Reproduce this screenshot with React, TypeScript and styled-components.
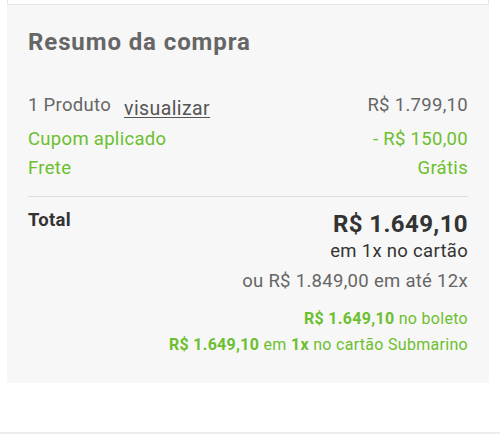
import React from "react";
import styled, { createGlobalStyle } from "styled-components";

const Global = createGlobalStyle`
  html, body { margin: 0; padding: 0; background: #fff; }
  body { font-family: Roboto, "Noto Sans", Arial, sans-serif; width: 500px; height: 445px; overflow: hidden; }
`;

const Page = styled.div`
  display: flex;
  flex-direction: column;
`;

const TopCard = styled.div`
  margin: 0 11px 0 7px;
  height: 4px;
  border: 1px solid #e6e6e6;
  border-top: none;
  background: #fff;
`;

const Panel = styled.section`
  margin: 0 11px 0 7px;
  background: #f7f7f7;
  padding: 23px 21px 25px 21px;
  display: flex;
  flex-direction: column;
`;

const Title = styled.h2`
  margin: 0 0 35px 0;
  font-size: 24px;
  line-height: 28px;
  font-weight: 700;
  letter-spacing: 0.9px;
  color: #666;
`;

const Row = styled.div<{ $green?: boolean; $gap?: number }>`
  display: flex;
  justify-content: space-between;
  align-items: baseline;
  font-size: 18.5px;
  line-height: 29px;
  letter-spacing: 0.3px;
  margin-bottom: ${(p) => p.$gap ?? 0}px;
  color: ${(p) => (p.$green ? "#6cbf2e" : "#666")};
`;

const Link = styled.a`
  color: #555;
  font-size: 19.5px;
  letter-spacing: 0.4px;
  line-height: 1;
  text-decoration: underline;
  text-underline-offset: 2px;
  margin-left: 13px;
  vertical-align: -4px;
`;

const Divider = styled.hr`
  border: none;
  border-top: 1px solid #dcdcdc;
  margin: 13px 0 12px;
`;

const TotalBlock = styled.div`
  display: flex;
  justify-content: space-between;
  align-items: flex-start;
`;

const TotalLabel = styled.div`
  font-size: 18.5px;
  font-weight: 700;
  letter-spacing: 0.3px;
  color: #333;
  line-height: 22px;
`;

const Prices = styled.div`
  display: flex;
  flex-direction: column;
  align-items: flex-end;
  text-align: right;
`;

const BigPrice = styled.div`
  font-size: 24px;
  font-weight: 700;
  letter-spacing: 0.4px;
  color: #333;
  line-height: 31px;
`;

const Line = styled.div<{ $tone: "dark" | "gray"; $top?: number }>`
  font-size: 18.5px;
  line-height: 22px;
  letter-spacing: 0.3px;
  margin-top: ${(p) => p.$top ?? 0}px;
  color: ${(p) => (p.$tone === "dark" ? "#333" : "#666")};
`;

const Promo = styled.div`
  margin-top: 14px;
  display: flex;
  flex-direction: column;
  align-items: flex-end;
`;

const PromoLine = styled.div`
  font-size: 16px;
  line-height: 26px;
  letter-spacing: 0.3px;
  color: #6cbf2e;
  b { font-weight: 700; }
`;

const BottomRule = styled.div`
  margin-top: 49px;
  height: 2px;
  background: #ececec;
`;

export default function App() {
  return (
    <Page>
      <Global />
      <TopCard />
      <Panel>
        <Title>Resumo da compra</Title>
        <Row $gap={5}>
          <span>
            1 Produto<Link>visualizar</Link>
          </span>
          <span>R$ 1.799,10</span>
        </Row>
        <Row $green>
          <span>Cupom aplicado</span>
          <span>- R$ 150,00</span>
        </Row>
        <Row $green>
          <span>Frete</span>
          <span>Grátis</span>
        </Row>
        <Divider />
        <TotalBlock>
          <TotalLabel>Total</TotalLabel>
          <Prices>
            <BigPrice>R$ 1.649,10</BigPrice>
            <Line $tone="dark">em 1x no cartão</Line>
            <Line $tone="gray" $top={8}>
              ou R$ 1.849,00 em até 12x
            </Line>
          </Prices>
        </TotalBlock>
        <Promo>
          <PromoLine>
            <b>R$ 1.649,10</b> no boleto
          </PromoLine>
          <PromoLine>
            <b>R$ 1.649,10</b> em <b>1x</b> no cartão Submarino
          </PromoLine>
        </Promo>
      </Panel>
      <BottomRule />
    </Page>
  );
}
